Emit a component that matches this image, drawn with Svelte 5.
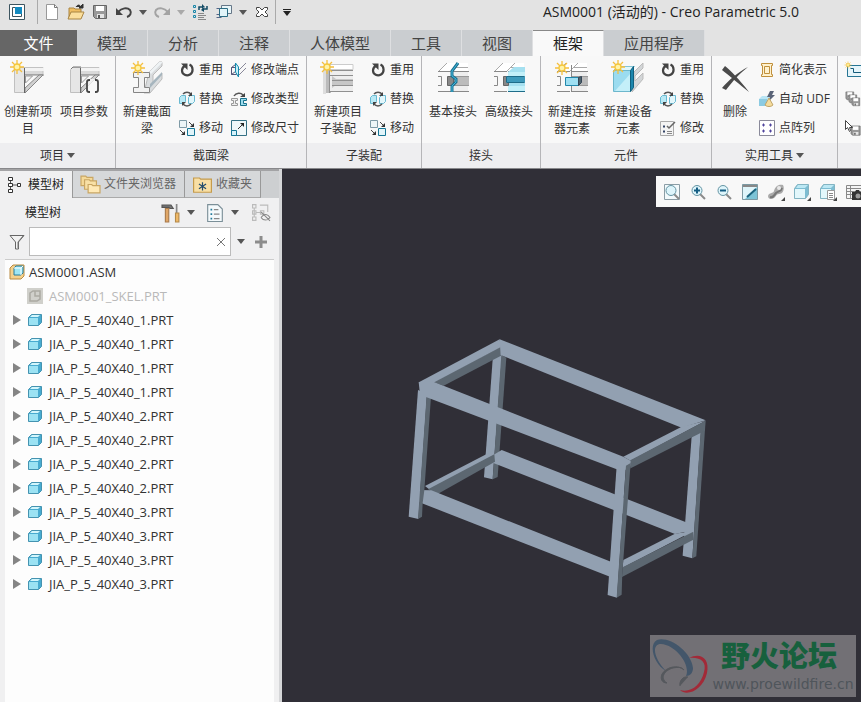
<script>
	let activeTab = $state('框架');
	let activePane = $state('模型树');
	let filter = $state('');

	const quickAccess = [
		{ icon: 'new', label: '新建' },
		{ icon: 'open', label: '打开' },
		{ icon: 'save', label: '保存' },
		{ icon: 'undo', label: '撤消', menu: true },
		{ icon: 'redo', label: '重做', menu: true, disabled: true },
		{ icon: 'regen', label: '重新生成' },
		{ icon: 'windows', label: '窗口', menu: true },
		{ icon: 'close', label: '关闭' }
	];

	const tabs = ['模型', '分析', '注释', '人体模型', '工具', '视图', '框架', '应用程序'];

	const reuse = { icon: 'reuse', label: '重用' };
	const replace = { icon: 'replace', label: '替换' };
	const move = { icon: 'move', label: '移动' };

	const groups = [
		{
			name: '项目',
			menu: true,
			large: [
				{ icon: 'newProject', lines: ['创建新项', '目'] },
				{ icon: 'params', lines: ['项目参数'] }
			],
			columns: []
		},
		{
			name: '截面梁',
			large: [{ icon: 'newBeam', lines: ['新建截面', '梁'] }],
			columns: [
				[reuse, replace, move],
				[
					{ icon: 'endpoint', label: '修改端点' },
					{ icon: 'type', label: '修改类型' },
					{ icon: 'size', label: '修改尺寸' }
				]
			]
		},
		{
			name: '子装配',
			large: [{ icon: 'newSub', lines: ['新建项目', '子装配'] }],
			columns: [[reuse, replace, move]]
		},
		{
			name: '接头',
			large: [
				{ icon: 'basicJoint', lines: ['基本接头'] },
				{ icon: 'advJoint', lines: ['高级接头'] }
			],
			columns: []
		},
		{
			name: '元件',
			large: [
				{ icon: 'connector', lines: ['新建连接', '器元素'] },
				{ icon: 'equipment', lines: ['新建设备', '元素'] }
			],
			columns: [[reuse, replace, { icon: 'modify', label: '修改' }]]
		},
		{
			name: '实用工具',
			menu: true,
			large: [{ icon: 'delete', lines: ['删除'], narrow: true }],
			columns: [
				[
					{ icon: 'simplify', label: '简化表示' },
					{ icon: 'udf', label: '自动 UDF' },
					{ icon: 'pattern', label: '点阵列' }
				]
			]
		},
		{
			name: '',
			large: [],
			columns: [
				[
					{ icon: 'layout', label: '' },
					{ icon: 'saveAll', label: '' },
					{ icon: 'pickSave', label: '' }
				]
			]
		}
	];

	const panes = [
		{ icon: 'treeTab', label: '模型树' },
		{ icon: 'folders', label: '文件夹浏览器' },
		{ icon: 'favorites', label: '收藏夹' }
	];

	const parts = [1, 1, 1, 1, 2, 2, 2, 2, 3, 3, 3, 3].map((n) => `JIA_P_5_40X40_${n}.PRT`);

	const viewTools = ['refit', 'zoomIn', 'zoomOut', 'repaint', 'appearance', 'display', 'saved', 'viewManager'];
</script>

{#snippet star()}
	<g stroke="#f5bf3d" stroke-width="1.3">
		<path d="M8 1v14M1 8h14M3 3l10 10M13 3L3 13" />
		<circle cx="8" cy="8" r="3" fill="#fff3a8" stroke="#f4c63c" />
	</g>
{/snippet}

{#snippet caret()}
	<svg class="caret" viewBox="0 0 8 5" aria-hidden="true"><path d="M0 0h8L4 5z" fill="currentColor" /></svg>
{/snippet}

{#snippet floppy()}
	<path d="M1.500 1.500h13v13h-11l-2-2z" fill="#999" stroke="#666" />
	<path d="M4 2h8v5H4z" fill="#fff" />
	<path d="M5 10h7v4H5z" fill="#e5e5e5" />
	<path d="M6 11h2v3H6z" fill="#555" />
{/snippet}

{#snippet bigIcon(name)}
	<svg class="big" viewBox="0 0 32 32" fill="none" aria-hidden="true">
		{#if name === 'newProject' || name === 'params'}
			<path d="M12 5.500h19v7H12z" fill="#d9d9d9" stroke="#c2c2c2" />
			<path d="M12 6h20v3H12z" fill="#f3f3f3" />
			<path d="M12 13h20" stroke="#888" />
			<path d="M27 13h4L13 31v-5z" fill="#d0d0d0" stroke="#888" />
			<path d="M13.500 14v7l7-7z" fill="#f4f4f4" stroke="#999" />
			<path d="M2.500 7.500l2-2h8v25h-10z" fill="#e6e6e6" stroke="#c0c0c0" />
			<path d="M12.500 6v25" stroke="#666" />
			{#if name === 'newProject'}
				<g transform="translate(-3 -3)">{@render star()}</g>
			{:else}
				<path d="M3 7l2-2h8" stroke="#777" />
				<path d="M18 17h13v14H18z" fill="#f8f8f8" opacity=".8" />
				<path d="M22 18h-1q-2 0-2 2v8q0 2 2 2h1M27 18h1q2 0 2 2v8q0 2-2 2h-1" stroke="#444" stroke-width="1.800" />
			{/if}
		{:else if name === 'newBeam'}
			<path d="M18 10L28 0h3v4l-9 9v8l9-10v6L19 31h-6z" fill="#d9dcde" stroke="#bbb" />
			<path d="M18 10L28 0h4L20 12z" fill="#eef2f4" />
			<path d="M19 22l12-12v3L19 26z" fill="#a6b5be" />
			<path d="M2.500 10.500h16v5h-5v10h5v5h-16v-5h5v-10h-5z" fill="#f2f2f2" stroke="#858585" />
			<g transform="translate(-1 -2)">{@render star()}</g>
		{:else if name === 'newSub'}
			<path d="M1 4h3v28H1z" fill="#ddd" />
			<path d="M4 5h5v26H4z" fill="#bbb" />
			<path d="M8 2.500h23v5H8z" fill="#fff" stroke="#ccc" />
			<path d="M7 8h24v22H7z" fill="#eee" />
			<path d="M10 14l4 3h17v6H14l-4 3z" fill="#c7c7c7" />
			<path d="M7 8.500h24M7 13.500h24M10 18.500h21M10 23.500h21M7 29.500h24M7.500 8v23" stroke="#909090" />
			<g transform="translate(-3 -3)">{@render star()}</g>
		{:else if name === 'delete'}
			<path d="M6 4c5 4 15 14 24 26C21 23 11 14 3 8z" fill="#4a4a4a" />
			<path d="M29 5C21 11 13 20 7 28l-4-2C9 19 19 10 29 5z" fill="#4a4a4a" />
		{:else if name === 'equipment'}
			<path d="M22 10l9-9v5l-8 8v5l8-8v6L20 30z" fill="#d3d6d8" stroke="#bbb" />
			<path d="M1.500 8.500l4-4h17l-4 4z" fill="#dff7fd" stroke="#84c4d6" />
			<path d="M1.500 8.500h17v21h-17z" fill="#9bdcf0" stroke="#6db7cc" />
			<path d="M3 29L18 12v17z" fill="#c4eff9" />
			<path d="M18.500 8.500l3-4v21l-3 4z" fill="#1c86ad" stroke="#0f607f" />
			<g transform="translate(-2 -3)">{@render star()}</g>
		{:else}
			<path d="M2 9l8-8h21v8z" fill="#fff" />
			<path d="M1 10l9-9M13 10l9-9M17 5.500h14" stroke="#aaa" />
			<path d="M1 14.500h3.500v9H1M1 9.500h13M1 29.500h13" stroke="#888" />
			<path d="M15 9.500h16v20H15z" fill="#eee" />
			<path d="M15 9.500h17M15 29.500h17" stroke="#888" />
			<path d="M15 14.500h17v9H15z" fill="#bbb" />
			<path d="M15 14.500h17M15 23.500h17" stroke="#999" />
			{#if name === 'basicJoint'}
				<path d="M10.500 14.500h6v9h-6z" fill="#888" stroke="#666" />
				<path d="M21 1l-6 8v5l4 3v3l-4 4v6" stroke="#1b7090" stroke-width="3" />
				<path d="M21 1l-6 8v5l4 3v3l-4 4v6" stroke="#42b8dc" />
			{:else if name === 'advJoint'}
				<path d="M15 10l6-5h11v25H15z" fill="#a5e0f0" />
				<path d="M15 10h17v4H15zM15 24h17v5H15z" fill="#c3f0f9" />
				<path d="M10.500 14.500h5v9h-5z" fill="#888" stroke="#666" />
				<path d="M13 14.500h19v6H13z" fill="#3d9abb" />
				<path d="M13.500 14.500h18M13.500 20.500h18M15 29.500h17M13.500 15v5" stroke="#1e6c89" />
			{:else}
				<path d="M15.500 3v27" stroke="#888" />
				<path d="M9.500 15.500h13v8h-13z" fill="#9edff2" stroke="#2288ac" />
				<path d="M22.500 15.500l3-1v6l-3 3z" fill="#4d626c" stroke="#345" />
				<g transform="translate(-2 -2)">{@render star()}</g>
			{/if}
		{/if}
	</svg>
{/snippet}

{#snippet icon(name)}
	<svg class="small" viewBox="0 0 16 16" fill="none" aria-hidden="true">
		{#if name === 'app'}
			<path d="M.5.5h15v15H.5z" fill="#fff" stroke="#3d5560" />
			<path d="M3.500 3.500h9v9h-9z" fill="#fff" stroke="#3d5560" />
			<path d="M6 3h7v7H6z" fill="#138ac0" />
		{:else if name === 'new'}
			<path d="M2.500.5h8l3 3v12h-11z" fill="#fff" stroke="#999" />
			<path d="M10.500.5v3h3" stroke="#777" />
		{:else if name === 'open'}
			<path d="M1 4h5l1 1h6v9H1z" fill="#efbd61" stroke="#a98543" />
			<path d="M3 8h13l-3 7H0z" fill="#fbdf9d" stroke="#a98543" />
			<path d="M8 3c2-3 4-2 5 0M15 0v4h-4z" stroke="#333" fill="#333" />
		{:else if name === 'save'}
			{@render floppy()}
		{:else if name === 'undo' || name === 'redo'}
			<g transform={name === 'redo' ? 'matrix(-1 0 0 1 16 0)' : undefined}>
				<path d="M2 8c4-4 9-5 12-2 2 3 0 6-3 7" stroke="#444" stroke-width="2" />
				<path d="M0 4v7h7z" fill="#444" />
			</g>
		{:else if name === 'regen'}
			<path d="M1.500 1.500h2v2h-2zM1.500 6.500h2v2h-2zM1.500 11.500h2v2h-2z" stroke="#1685a8" />
			<path d="M6 9.500h6M6 11.500h8M6 13.500h6M6 15.500h8" stroke="#888" />
			<path d="M7 6V3h4M15 2v3h-4" stroke="#124b65" stroke-width="1.500" />
			<path d="M10 0v5l3-2zM12 3v5L9 6z" fill="#124b65" />
		{:else if name === 'windows'}
			<path d="M5.500 1.500h10v8h-10z" fill="#e9f6f9" stroke="#678" />
			<path d="M.5 4.500h5M.5 13.500h5M.5 10.500h3" stroke="#568" />
			<path d="M3.500 4.500h8v8h-8z" fill="#e2f5f9" stroke="#2b6c83" />
		{:else if name === 'close'}
			<path d="M2.500 3.500h3L8 6l2.500-2.500h3v2L11 8l2.500 2.500v2h-3L8 10l-2.500 2.500h-3v-2L5 8 2.500 5.500z" fill="#fff" stroke="#444" />
		{:else if name === 'reuse'}
			<path d="M10.500 2.500c4 2 4 8 .5 10s-8 0-8-4c0-2 1-3.500 3-5" stroke="#444" stroke-width="2.200" />
			<path d="M2 1.500h6.500V8z" fill="#444" />
		{:else if name === 'replace'}
			<path d="M.5 6.500l2-2h4v6l-2 2h-4z" fill="#b9e9f5" stroke="#68b9d1" />
			<path d="M9.500 6.500l2-2h4v6l-2 2h-4z" fill="#e2f6fb" stroke="#68b9d1" />
			<path d="M4 3c2-2.500 6-2.500 8 0M12 13c-2 2.500-6 2.500-8 0" stroke="#555" stroke-width="1.500" />
			<path d="M13 1v4H9zM3 15v-4h4z" fill="#444" />
		{:else if name === 'move'}
			<path d="M.5.5h7v7h-7z" stroke="#7f9aa6" fill="#edf5f7" />
			<path d="M8.500 8.500h7v7h-7z" stroke="#167695" fill="#e1f4f9" />
			<path d="M10 2l4 4M1 10l4 4" stroke="#444" />
			<path d="M15 3v4h-4zM6 11v4H2z" fill="#333" />
		{:else if name === 'endpoint'}
			<path d="M15 1L7 9M15 6l-7 7" stroke="#889" />
			<path d="M.500 5.500h5v7h-5zM.500 5.500l4-3M.500 12.500l4-3" stroke="#557" />
			<path d="M4.500 1v9l3 5V5z" fill="#c7eef8" stroke="#168bae" />
		{:else if name === 'type'}
			<path d="M.500 7.500h6v2h-2v3h2v2h-6v-2h2v-3h-2z" fill="#eee" stroke="#999" />
			<path d="M9.500 7.500h6v2h-3v3h3v2h-6z" fill="#9ddced" stroke="#16708c" />
			<path d="M3 5c2-3.500 7-3.500 9-1" stroke="#555" stroke-width="1.500" />
			<path d="M14 2v4H9z" fill="#444" />
		{:else if name === 'size'}
			<path d="M.500.5h15v15H.5z" stroke="#347084" fill="#eff7f9" />
			<path d="M.500 10.500h5v5h-5z" stroke="#147696" fill="#d6f2fa" />
			<path d="M7 9l5-5" stroke="#333" />
			<path d="M9 3h4v4z" fill="#222" />
		{:else if name === 'modify'}
			<path d="M.500 1.500h13v14H.5z" fill="#f4f4f4" stroke="#aaa" />
			<path d="M3 6.500h2M3 11.500h2" stroke="#346" stroke-width="2" />
			<path d="M7 11.500h5M7 13.500h5" stroke="#888" />
			<path d="M15 2L9 8l-2-2" stroke="#666" stroke-width="1.500" />
		{:else if name === 'simplify'}
			<path d="M2.500 1.500h11v2h-1v9h1v2h-11v-2h1v-9h-1zM5.500 4.500h5v7h-5z" fill="#fff2cf" stroke="#c0903c" />
		{:else if name === 'udf'}
			<path d="M0 8l3-3h8v7l-2 3H0z" fill="#b9e5f4" />
			<path d="M0 8h8v7H0z" fill="#8ccbe2" />
			<path d="M11 0h4l-2 4h3l-7 7 2-5H8z" fill="#5a6478" />
			<path d="M10 7l4 7c-2 2-6 2-8 0z" fill="#f5dc9d" stroke="#c0a468" />
		{:else if name === 'pattern'}
			<path d="M.500.5h15v15H.5z" fill="#fff" stroke="#8a8a9a" />
			<path d="M3 5h3M4.500 3.500v3M10 5h3M11.500 3.500v3M3 11h3M4.500 9.500v3M10 11h3M11.500 9.500v3" stroke="#4f439d" />
		{:else if name === 'layout'}
			<path d="M2.500 3.500h14v11h-14z" fill="#e6f5fa" stroke="#267594" />
			<path d="M5.500 6.500h3v4h8" stroke="#155b7b" />
			<g transform="translate(-1 -1) scale(.5)">{@render star()}</g>
		{:else if name === 'saveAll'}
			<g transform="scale(.6)">{@render floppy()}</g>
			<g transform="translate(3 3) scale(.6)">{@render floppy()}</g>
			<g transform="translate(6 6) scale(.6)">{@render floppy()}</g>
		{:else if name === 'pickSave'}
			<g transform="translate(5 5) scale(.7)">{@render floppy()}</g>
			<path d="M.500.5v9l2-2 2 4 1-1-1-3h3z" fill="#fff" stroke="#444" />
		{:else if name === 'treeTab'}
			<path d="M2.500 4v8M4 8h6" stroke="#555" />
			<path d="M.500.5h4v3h-4zM.500 6.500h4v3h-4zM.500 12.500h4v3h-4zM9.500 6.500h3v3h-3z" fill="#fff" stroke="#333" />
		{:else if name === 'folders'}
			<path d="M0 1h4l1 1h5v7H0z" fill="#f5d998" stroke="#c9a663" />
			<path d="M3 4h4l1 1h5v7H3z" fill="#f8e0a6" stroke="#c9a663" />
			<path d="M6 8h3l1 1h6v6H6z" fill="#ffe9b5" stroke="#c9a663" />
		{:else if name === 'favorites'}
			<path d="M.500 2.500h5l1 1h9v11H.5z" fill="#f8dfa5" stroke="#c59b4c" />
			<path d="M8 6v7M5 7.500l6 4M11 7.500l-6 4" stroke="#234d6e" />
		{:else if name === 'tools'}
			<path d="M0 1h8l2 3H7L6 3H0z" fill="#777" stroke="#555" />
			<path d="M3 4h3v12H3z" fill="#e0a768" stroke="#a97b4c" />
			<path d="M13 0v8" stroke="#888" stroke-width="1.500" />
			<path d="M12 8h3v8h-3z" fill="#efb968" stroke="#b58a4a" />
		{:else if name === 'list'}
			<path d="M1.500.5h9l4 4v11h-13z" fill="#f5fafc" stroke="#7b8f98" />
			<path d="M4 5h1.500M4 9h1.500M4 13h1.500" stroke="#247b9b" stroke-width="1.500" />
			<path d="M7 5h4M7 9h5M7 13h5" stroke="#888" />
		{:else if name === 'hidden'}
			<g stroke="#bbb">
				<path d="M.500.5h3v3h-3zM.500 6h3v3h-3zM.500 11.500h3v3h-3zM7.500 6h3v3h-3zM2 4v8M4 7.500h3M7 1h7v6" />
				<path d="M8 12c3-4 6-3 8 0-2 3-6 3-8 0M8 7l8 8" stroke="#888" />
			</g>
		{:else if name === 'filter'}
			<path d="M1 1.500h14L9.500 8v7h-3V8z" fill="#f2f2f2" stroke="#666" />
			<path d="M14 2L9 8v6" stroke="#777" />
		{:else if name === 'assembly'}
			<path d="M1 4l3-3h11v11l-3 3H1z" fill="#f5d18c" stroke="#b88b43" />
			<path d="M5 4l2-2h7v7l-2 2H5z" fill="#9ee7f5" stroke="#287c9b" />
			<path d="M5 4h7v7M12 4l2-2" stroke="#fff" />
		{:else if name === 'skeleton'}
			<path d="M0 0h16v16H0z" fill="#d0d0cb" />
			<path d="M3 5l3-2h7v8l-3 2H3zM8 3v5h5" stroke="#aaa9a3" stroke-width="1.500" />
		{:else if name === 'part'}
			<path d="M1.500 5.500l3-3h10v8l-3 3h-10z" fill="#48abd0" stroke="#4593b0" />
			<path d="M2 6h9v7H2z" fill="#9be2f3" />
			<path d="M3 5l2-2h8l-2 2z" fill="#d2f6fc" />
		{:else if name === 'refit' || name === 'zoomIn' || name === 'zoomOut'}
			{#if name === 'refit'}<path d="M.500.5h15v15H.5z" fill="#f3fafc" stroke="#8b9da5" />{/if}
			<path d="M10 10l5 5" stroke="#8b8b8b" stroke-width="2" />
			<circle cx="7" cy="6.500" r="5" fill="#def5fb" stroke="#6494a3" />
			{#if name !== 'refit'}<path d="M4 6.500h6" stroke="#145d83" stroke-width="2" />{/if}
			{#if name === 'zoomIn'}<path d="M7 3.500v6" stroke="#145d83" stroke-width="2" />{/if}
		{:else if name === 'repaint'}
			<path d="M.500.5h15v15H.5z" fill="#7cc3d6" stroke="#7d9aa3" />
			<path d="M1 3h14L3 15H1z" fill="#dff5fa" />
			<path d="M1 1h14v2H1z" fill="#888" />
			<path d="M14 5l-9 8" stroke="#1b637e" stroke-width="2" />
		{:else if name === 'appearance'}
			<path d="M0 12c1-4 5-2 6-5 1-4 4-7 9-6 2 4 0 9-4 9-3 0-3 3-5 4-3 2-6 1-6-2z" fill="#aaa" />
			<path d="M2 13c4 1 4-2 6-4s5-1 6-5" stroke="#777" stroke-width="2" />
			<circle cx="11" cy="4" r="2" fill="#e8e8e8" />
			<path d="M17 13v4h-4z" fill="#444" />
		{:else if name === 'display' || name === 'saved'}
			<path d="M.500 4.500l3-4h11v10l-3 4h-11z" fill="#7dbdd2" stroke="#83b4c2" />
			<path d="M1 5h10v9H1z" fill="#e3f7fb" />
			<path d="M2 4l2-3h10l-3 3z" fill="#bce8f4" />
			{#if name === 'saved'}
				<path d="M7.500 6.500h7v9h-7z" fill="#fff" stroke="#999" />
				<path d="M9 9.500h4M9 11.500h4M9 13.500h4" stroke="#888" />
			{/if}
			<path d="M17 13v4h-4z" fill="#444" />
		{:else if name === 'viewManager'}
			<path d="M.500 1.500h15v13H.5zM1 4.500h15M1 7.500h15M1 10.500h15M4.500 2v12" fill="#f4f4f4" stroke="#888" />
			<path d="M6 8h3l1-2h3l1 2h2v8H6z" fill="#333" />
			<circle cx="12" cy="12" r="2.500" fill="#999" />
		{/if}
	</svg>
{/snippet}

<div class="app">
	<header class="titlebar">
		<button class="tool" aria-label="应用程序">{@render icon('app')}</button>
		<span class="sep"></span>
		{#each quickAccess as item}
			<button class="tool" class:faded={item.disabled} aria-label={item.label}>{@render icon(item.icon)}</button>
			{#if item.menu}
				<button class="arrow" class:faded={item.disabled} aria-label="{item.label}选项">{@render caret()}</button>
			{/if}
		{/each}
		<span class="line"></span>
		<button class="arrow custom" aria-label="自定义">{@render caret()}</button>
		<h1>ASM0001 (活动的) - Creo Parametric 5.0</h1>
	</header>

	<nav class="tabs">
		<button class="file">文件</button>
		{#each tabs as tab}
			<button class:active={activeTab === tab} onclick={() => (activeTab = tab)}>{tab}</button>
		{/each}
	</nav>

	<section class="ribbon">
		{#each groups as group}
			<div class="group">
				<div class="commands">
					{#each group.large as item}
						<button class="large" class:narrow={item.narrow}>
							{@render bigIcon(item.icon)}
							{#each item.lines as text}<span>{text}</span>{/each}
						</button>
					{/each}
					{#each group.columns as column}
						<div class="column">
							{#each column as item}
								<button class="command" aria-label={item.label || item.icon}>
									{@render icon(item.icon)}
									{#if item.label}<span>{item.label}</span>{/if}
								</button>
							{/each}
						</div>
					{/each}
				</div>
				<div class="group-name">{group.name}{#if group.menu}{@render caret()}{/if}</div>
			</div>
		{/each}
	</section>

	<main>
		<aside>
			<div class="panes">
				{#each panes as pane}
					<button class:active={activePane === pane.label} onclick={() => (activePane = pane.label)}>
						{@render icon(pane.icon)}<span>{pane.label}</span>
					</button>
				{/each}
			</div>
			<div class="tree-head">
				<h2>模型树</h2>
				<button class="tool" aria-label="设置">{@render icon('tools')}</button>
				<button class="arrow" aria-label="设置选项">{@render caret()}</button>
				<button class="tool" aria-label="显示">{@render icon('list')}</button>
				<button class="arrow" aria-label="显示选项">{@render caret()}</button>
				<button class="tool last" aria-label="隐藏项">{@render icon('hidden')}</button>
			</div>
			<div class="filter">
				{@render icon('filter')}
				<div class="field">
					<input type="text" aria-label="过滤" bind:value={filter} />
					<button aria-label="清除" onclick={() => (filter = '')}>
						<svg viewBox="0 0 8 8"><path d="M0 0l8 8M8 0L0 8" stroke="#777" /></svg>
					</button>
				</div>
				<button class="arrow" aria-label="过滤选项">{@render caret()}</button>
				<button class="add" aria-label="添加">
					<svg viewBox="0 0 12 12"><path d="M6 0v12M0 6h12" stroke="#8c8c8c" stroke-width="3" /></svg>
				</button>
			</div>
			<ul class="tree">
				<li class="root">{@render icon('assembly')}<span>ASM0001.ASM</span></li>
				<li class="skel"><i></i>{@render icon('skeleton')}<span>ASM0001_SKEL.PRT</span></li>
				{#each parts as part}
					<li>
						<button class="expand" aria-label="展开">
							<svg viewBox="0 0 8 10"><path d="M0 0l8 5-8 5z" fill="#858585" /></svg>
						</button>
						{@render icon('part')}<span>{part}</span>
					</li>
				{/each}
			</ul>
		</aside>

		<div class="canvas">
			<svg class="model" viewBox="0 0 579 533" preserveAspectRatio="xMinYMin slice" role="img" aria-label="框架模型">
				<g transform="translate(118 161) scale(.3333)">
					<!-- rear legs and rear rails -->
					<path class="lit" d="M279 75h27l-28 373-26-6z" />
					<path class="dark" d="M304 75l15 8-26 358-15 7z" />
					<path class="lit" d="M875 320l28-16-26 381-29-8z" />
					<path class="dark" d="M902 306l13-6-26 379-12 6z" />
					<path class="lit" d="M275 378l30-18 557 218 20 22-57 12-547-214z" />
					<path class="lit" d="M75 468l204-106 4 12-190 108z" />
					<path class="dark" d="M84 478l199-105 2 22-172 97z" />
					<path class="dark" d="M303 50v27l-172 90-31-11z" />
					<path class="lit" d="M299 28l4 23-203 107-42-2z" />
					<path class="lit" d="M299 28l21 8 597 235-72 22L302 75z" />
					<!-- lower front and right rails -->
					<path class="lit" d="M670 690l155-79 55-8-212 110z" />
					<path class="dark" d="M668 712l212-107v24L666 741z" />
					<path class="lit" d="M56 480l38 1 550 219-12 41L56 516z" />
					<!-- front legs and top rails -->
					<path class="lit" d="M54 180l27 12-26 375-29-7z" />
					<path class="dark" d="M80 195l13 5-20 281-5 38-2 41-12 7z" />
					<path class="lit" d="M670 380l175-90 72-18-225 120z" />
					<path class="dark" d="M688 392l229-120-2 30-223 113z" />
					<path class="lit" d="M56 156l44-1 570 225 22 12-2 28-40-2L60 194z" />
					<path class="lit" d="M650 408l28-4-27 399-28-8z" />
					<path class="dark" d="M678 407l14-8-25 330-2 65-15 9z" />
				</g>
			</svg>
			<div class="view-bar">
				{#each viewTools as tool}
					<button aria-label={tool}>{@render icon(tool)}</button>
				{/each}
			</div>
			<div class="watermark">
				<svg viewBox="0 0 60 62" fill="none" aria-hidden="true">
					<path fill-rule="evenodd" d="M7 5c12-4 34 11 36 28 0 5-3 8-7 8 5-11-10-31-25-32-10 0-7 15 5 27C4 29-2 10 7 5z" fill="#43566a" />
					<path d="M39 23c12-6 21 1 18 15-4 17-20 24-27 17 11 3 21-5 24-18 3-10-3-15-15-14z" fill="#a22a38" />
					<path d="M34 35c-6-6-18-3-22 4-2 5 0 9 5 9-8-5-2-13 6-15 5-1 9-1 11 2zM38 42c-5-1-9 4-8 9" fill="#55585d" stroke="#55585d" />
				</svg>
				<div>
					<strong>野火论坛</strong>
					<span>www.proewildfire.cn</span>
				</div>
			</div>
		</div>
	</main>
</div>

<style>
	:global(body) { margin: 0; }
	.app { display: flex; flex-direction: column; min-height: 100vh; overflow: hidden; background: #e3e3e3; color: #333; font: 12px/16px "Open Sans", "Noto Sans CJK SC", sans-serif; }
	button { display: flex; align-items: center; justify-content: center; flex: none; margin: 0; padding: 0; border: 0; background: none; color: inherit; font: inherit; white-space: nowrap; }
	svg { display: block; flex: none; }
	h1, h2, ul { margin: 0; padding: 0; font: inherit; }
	.small { width: 16px; height: 16px; overflow: visible; }
	.big { width: 32px; height: 32px; overflow: visible; }
	.caret { width: 8px; height: 5px; color: #555; }
	.tool { width: 24px; height: 24px; }
	.arrow { width: 14px; height: 24px; }
	.faded { opacity: 0.4; }

	.titlebar { display: flex; align-items: center; height: 24px; padding: 0 62px 6px 5px; }
	.sep { width: 1px; height: 24px; margin: 0 2px 0 8px; background: #aaa; }
	.line { width: 1px; height: 24px; margin: 0 4px 0 1px; background: #aaa; }
	.custom .caret { color: #222; border-top: 1px solid #222; padding-top: 1px; }
	h1 { margin-left: auto; color: #222; font-size: 14px; white-space: nowrap; }

	.tabs { display: flex; height: 26px; font-size: 15px; line-height: 20px; }
	.tabs button { box-sizing: border-box; padding: 0 20px 1px; border-right: 1px solid #dedfe1; background: #cacdd0; color: #444; }
	.tabs .file { width: 77px; border: 0; background: #666; color: #fff; }
	.tabs .active { padding-bottom: 2px; border-top: 1px solid #888; background: #f9f9f9; color: #222; }

	.ribbon { display: flex; overflow: hidden; border-bottom: 1px solid #88888b; background: #f8f8f8; }
	.group { display: flex; flex: none; flex-direction: column; border-right: 1px solid #b5b5b8; }
	.group:last-child { flex: 1 0 40px; border: 0; }
	.commands { display: flex; height: 87px; padding: 0 3px; }
	.group:first-child .commands { padding-left: 0; }
	.large { flex-direction: column; justify-content: flex-start; width: 56px; padding-top: 6px; line-height: 17px; }
	.large .big { margin-bottom: 9px; }
	.narrow { width: 40px; }
	.column { display: flex; flex-direction: column; gap: 1px; }
	.command { justify-content: flex-start; gap: 4px; height: 28px; padding: 0 4px; }
	.group-name { display: flex; align-items: center; justify-content: center; gap: 3px; height: 25px; background: #eeeef0; }

	main { display: flex; flex: 1; }
	aside { box-sizing: border-box; display: flex; flex: none; flex-direction: column; width: 282px; border-right: 3px solid #d5d6d8; background: #f0f0f1; }
	.panes { display: flex; height: 27px; border-top: 2px solid #a3a3a5; background: #cdcfd1; }
	.panes button { gap: 4px; box-sizing: border-box; padding: 0 8px; border-right: 1px solid #999; border-bottom: 1px solid #aaa; background: #d6d8da; color: #666; }
	.panes .small { width: 19px; height: 19px; }
	.panes .active { border-bottom: 0; background: #f0f0f1; color: #222; }
	.panes button:first-child .small { width: 16px; height: 16px; }
	.tree-head { display: flex; align-items: center; height: 29px; padding: 0 6px 0 25px; }
	h2 { margin-right: auto; color: #222; }
	.tree-head .arrow { margin-right: 4px; width: 16px; }
	.tree-head .last { margin-left: 2px; }
	.tree-head .small { width: 18px; height: 18px; }
	.filter { display: flex; align-items: center; box-sizing: border-box; height: 31px; padding: 0 8px 2px 9px; }
	.field { display: flex; flex: 1; box-sizing: border-box; height: 29px; margin-left: 4px; border: 1px solid #bbb; background: #fff; }
	.field input { flex: 1; width: 0; padding: 0 4px; border: 0; background: none; font: inherit; outline: 0; }
	.field button { width: 18px; }
	.field svg { width: 8px; height: 8px; }
	.filter .arrow { width: 20px; }
	.add svg { width: 12px; height: 12px; margin: 0 4px; }
	.tree { flex: 1; margin: 1px 5px 0; border-top: 1px solid #ccc; background: #fdfdfd; list-style: none; font-size: 13px; }
	.tree li { display: flex; align-items: center; gap: 6px; height: 24px; padding-left: 8px; white-space: nowrap; }
	.tree .root { gap: 4px; padding-left: 4px; }
	.tree .skel { color: #b9b9b9; }
	.tree .skel i { width: 8px; }
	.expand, .expand svg { width: 8px; height: 10px; }

	.canvas { position: relative; flex: 1; overflow: hidden; background: #302f37; }
	.model { position: absolute; inset: 0; width: 100%; height: 100%; }
	.lit { fill: #92a0b1; }
	.dark { fill: #5c6771; }
	.view-bar { position: absolute; top: 7px; right: -9px; display: flex; padding: 0 3px; background: #f8f8f8; }
	.view-bar button { width: 26px; height: 31px; }
	.watermark { position: absolute; right: 5px; bottom: 5px; display: flex; width: 206px; height: 62px; background: #727075; }
	.watermark svg { width: 60px; height: 62px; }
	.watermark div { display: flex; flex: 1; flex-direction: column; align-items: center; }
	.watermark strong { margin-right: 8px; color: #17603d; font: 900 29px/38px "Noto Sans CJK SC", sans-serif; }
	.watermark span { color: #4f555b; font: 14px/22px "DejaVu Sans", sans-serif; }
</style>
